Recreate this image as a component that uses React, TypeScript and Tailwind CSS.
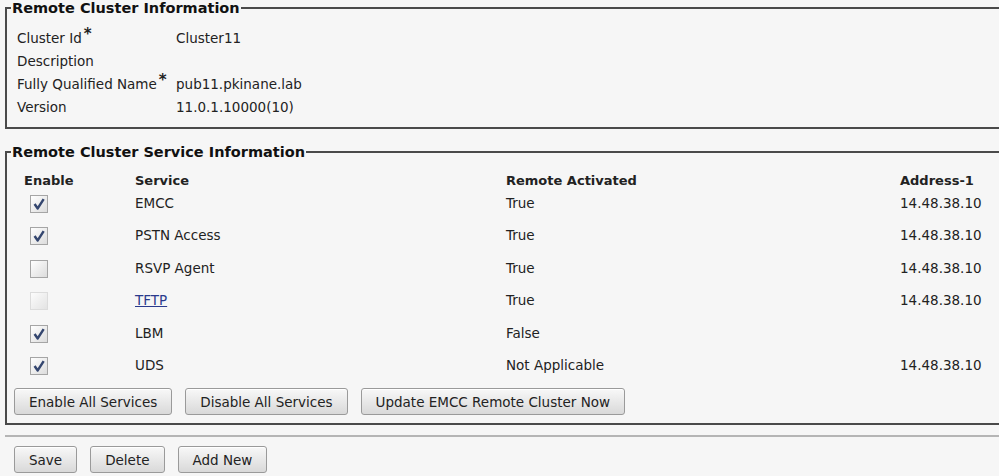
import React from "react";

const font = { fontFamily: '"DejaVu Sans", Verdana, sans-serif' };

type Svc = { on: boolean; dim?: boolean; name: string; link?: boolean; active: string; addr: string };

const services: Svc[] = [
  { on: true, name: "EMCC", active: "True", addr: "14.48.38.10" },
  { on: true, name: "PSTN Access", active: "True", addr: "14.48.38.10" },
  { on: false, name: "RSVP Agent", active: "True", addr: "14.48.38.10" },
  { on: false, dim: true, name: "TFTP", link: true, active: "True", addr: "14.48.38.10" },
  { on: true, name: "LBM", active: "False", addr: "" },
  { on: true, name: "UDS", active: "Not Applicable", addr: "14.48.38.10" },
];

function Check({ on, dim }: { on: boolean; dim?: boolean }) {
  return (
    <span
      className={
        "mt-[5px] ml-[6px] flex h-[18px] w-[18px] items-center justify-center border bg-gradient-to-br from-[#ffffff] to-[#dcdcdc] " +
        (dim ? "border-[#d2d2d2] opacity-70" : "border-[#a5a5a5]")
      }
    >
      {on && (
        <svg viewBox="0 0 12 12" className="h-[14px] w-[14px]">
          <path d="M2.2 6 L4.9 9.8 L10 1.8" fill="none" stroke="#34466f" strokeWidth="2.1" strokeLinejoin="round" />
        </svg>
      )}
    </span>
  );
}

function Btn({ children }: { children: React.ReactNode }) {
  return (
    <button className="h-[27px] rounded-[3px] border border-[#9a9a9a] bg-gradient-to-b from-[#f8f8f8] to-[#d9d9d9] px-[14px] text-[13.5px] text-[#222] shadow-[inset_0_1px_0_#fff]">
      {children}
    </button>
  );
}

function Star() {
  return <span className="relative -top-[4px] ml-[2px] text-[15px] font-bold leading-none">*</span>;
}

export default function App() {
  return (
    <div className="h-[476px] w-[999px] overflow-hidden bg-[#f6f6f6] text-[13.5px] text-[#222]" style={font}>
      <fieldset className="ml-[5px] w-[1010px] border-2 border-r-0 border-[#4a4a4a]">
        <legend className="ml-[4px] px-[1px] text-[14.5px] font-bold leading-[16px] text-[#111]">Remote Cluster Information</legend>
        <div className="mt-[11px] grid grid-cols-[159px_auto] pb-[8px] pl-[10px] leading-[23px]">
          <span>Cluster Id<Star /></span>
          <span>Cluster11</span>
          <span>Description</span>
          <span></span>
          <span>Fully Qualified Name<Star /></span>
          <span>pub11.pkinane.lab</span>
          <span>Version</span>
          <span>11.0.1.10000(10)</span>
        </div>
      </fieldset>

      <fieldset className="mt-[15px] ml-[5px] w-[1010px] border-2 border-r-0 border-[#4a4a4a]">
        <legend className="ml-[4px] px-[1px] text-[14.5px] font-bold leading-[16px] text-[#111]">Remote Cluster Service Information</legend>
        <div className="pb-[8px] pl-[7px]">
          <div className="mt-[12px] grid grid-cols-[111px_371px_394px_auto] pl-[10px]">
            <span className="text-[13px] font-bold leading-[18px]">Enable</span>
            <span className="text-[13px] font-bold leading-[18px]">Service</span>
            <span className="text-[13px] font-bold leading-[18px]">Remote Activated</span>
            <span className="text-[13px] font-bold leading-[18px]">Address-1</span>
            {services.map((s) => (
              <React.Fragment key={s.name}>
                <div className="h-[32.4px]">
                  <Check on={s.on} dim={s.dim} />
                </div>
                <span className="leading-[26px]">
                  {s.link ? <a className="text-[#2a3a8c] underline">{s.name}</a> : s.name}
                </span>
                <span className="leading-[26px]">{s.active}</span>
                <span className="leading-[26px]">{s.addr}</span>
              </React.Fragment>
            ))}
          </div>
          <div className="mt-[4px] flex gap-[13px]">
            <Btn>Enable All Services</Btn>
            <Btn>Disable All Services</Btn>
            <Btn>Update EMCC Remote Cluster Now</Btn>
          </div>
        </div>
      </fieldset>

      <div className="mt-[10px] ml-[5px] h-[2px] bg-[#b5b5b5]" />
      <div className="mt-[9px] ml-[14px] flex gap-[13px]">
        <Btn>Save</Btn>
        <Btn>Delete</Btn>
        <Btn>Add New</Btn>
      </div>
    </div>
  );
}
